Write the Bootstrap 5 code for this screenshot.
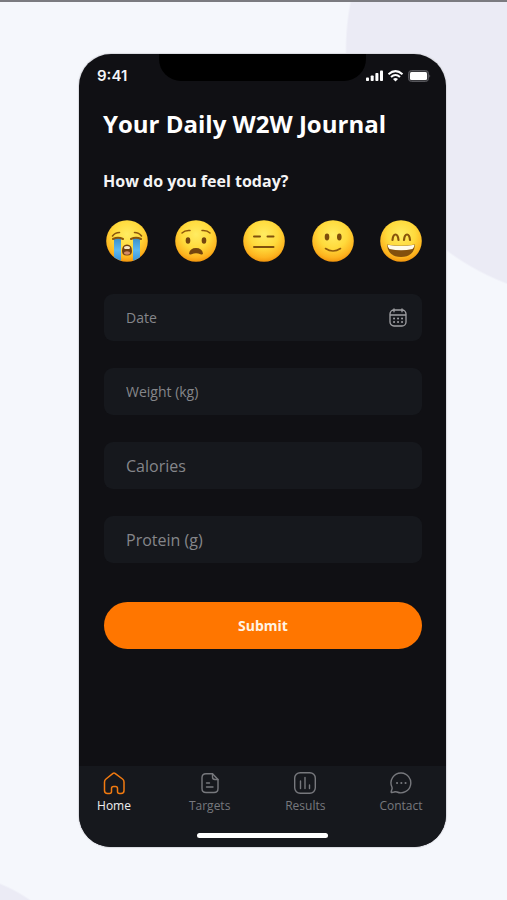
<!DOCTYPE html>
<html lang="en">
<head>
<meta charset="utf-8">
<meta name="viewport" content="width=device-width, initial-scale=1">
<title>Your Daily W2W Journal</title>
<link href="https://cdn.jsdelivr.net/npm/bootstrap@5.3.0/dist/css/bootstrap.min.css" rel="stylesheet">
<style>
  body {
    font-family: "Open Sans", "Noto Sans", sans-serif;
    background:
      radial-gradient(circle at calc(100% + 89px) 50px, #ebebf5 249px, transparent 251px),
      radial-gradient(circle at -56px calc(100% + 123px), #ebebf5 149px, transparent 151px),
      #f5f7fc;
    border-top: 2px solid #7b7b80;
    padding: 52px 61px 53px 79px;
  }
  .phone { background: #101014; border-radius: 32px; box-shadow: 0 0 1px 1px #d9dae0; }
  .status { display: grid; grid-template-columns: 1fr 207px 1fr; height: 44px; color: #f5f5f7; }
  .status time { font: 600 15px/20px "Inter", sans-serif; padding-left: 18px; }
  .status svg { margin-right: 15px; }
  .notch { height: 27px; background: #000; border-radius: 0 0 22px 22px; }
  .screen { padding: 0 24px; }
  .title { font-size: 24px; line-height: 32px; font-weight: 700; margin: 10px 0 0; color: #fff; }
  .ask { font-size: 16px; line-height: 24px; font-weight: 700; margin: 29px 0 27px; color: #f4f4f5; }
  .mood { border: 0; padding: 0; background: none; border-radius: 50%; line-height: 0; }
  .moods { padding: 0 0 0 3px; }
  .entries { gap: 27px; margin-top: 32px; }
  .entry { background: #16181d; border-radius: 9px; height: 47px; padding: 0 15px 0 22px; margin-left: 1px; color: #85868a; }
  .entry input { background: none; border: 0; color: #f4f4f5; padding: 0; min-width: 0; font-size: 16px; line-height: 24px; outline: 0; }
  .entry input::placeholder { color: #85868a; opacity: 1; }
  .entry .compact { font-size: 14px; }
  .send { height: 47px; margin: 39px 0 0 1px; background: #ff7600; color: #fff3e4; font-size: 14px; font-weight: 700; border: 0; }
  .send:hover { background: #ee6d00; color: #fff; }
  .tabs { background: #16181d; margin-top: 117px; padding: 5px 0 9px; border-radius: 0 0 32px 32px; }
  .tab-row { padding: 0 23px 0 13px; }
  .tab { width: 44px; color: #77787d; font-size: 12px; line-height: 16px; text-decoration: none; gap: 3px; }
  .tab.active { color: #eeeeef; }
  .tab.active svg { color: #f17a10; }
  .homebar { width: 131px; height: 5px; border-radius: 3px; background: #fff; margin-top: 19px; }
</style>
<script src="https://cdn.jsdelivr.net/npm/bootstrap@5.3.0/dist/js/bootstrap.bundle.min.js"></script>
</head>
<body class="min-vh-100">
<main class="phone">
  <div class="status align-items-center">
    <time>9:41</time>
    <div class="notch align-self-start"></div>
    <svg class="ms-auto" width="65" height="14" viewBox="0 0 65 14" fill="#fff" aria-hidden="true">
      <rect x="0" y="8.5" width="3" height="3.5" rx=".8"/><rect x="4.7" y="6.5" width="3" height="5.5" rx=".8"/><rect x="9.4" y="4" width="3" height="8" rx=".8"/><rect x="14" y="1.5" width="3" height="10.5" rx=".8"/>
      <g fill="none" stroke="#fff" stroke-width="2"><path d="M22.500 5.200Q29.500 -1 36.500 5.200"/><path d="M25 8Q29.500 4 34 8"/></g>
      <path d="M27 10Q29.500 8 32 10L29.500 12.500Z"/>
      <rect x="42.500" y="1.500" width="20" height="11" rx="3" fill="#38383c" stroke="#55555a"/><rect x="44" y="3" width="17" height="8" rx="1.500"/><path d="M63.500 5.200q1.500 1.800 0 3.600z" fill="#77777b"/>
    </svg>
  </div>

  <form class="screen">
    <h1 class="title">Your Daily W2W Journal</h1>
    <h2 class="ask">How do you feel today?</h2>
    <svg width="0" height="0" class="position-absolute" aria-hidden="true">
      <defs>
        <radialGradient id="face" cx=".5" cy=".34" r=".68">
          <stop offset="0" stop-color="#ffec62"/><stop offset=".5" stop-color="#ffda3c"/><stop offset=".82" stop-color="#fdb41f"/><stop offset="1" stop-color="#f08f0a"/>
        </radialGradient>
        <linearGradient id="tear" x2="0" y2="1"><stop offset="0" stop-color="#3a8fc9"/><stop offset=".5" stop-color="#5db9f0"/><stop offset="1" stop-color="#398fd4"/></linearGradient>
        <clipPath id="round"><circle cx="21" cy="21" r="20.700"/></clipPath>
      </defs>
    </svg>
    <div class="moods d-flex justify-content-between">
      <button type="button" class="mood" aria-label="Terrible">
        <svg width="42" height="42" viewBox="0 0 42 42"><circle cx="21" cy="21" r="20.800" fill="url(#face)"/>
          <g clip-path="url(#round)"><path d="M8 19Q11 17 15 19V42H8ZM27 19Q31 17 34 19V42H27Z" fill="url(#tear)"/></g>
          <g fill="none" stroke="#8a560d" stroke-width="1.600" stroke-linecap="round"><path d="M6.500 16Q9 12.500 13.500 12.500M28.500 12.500Q33 12.500 35.500 16"/><path d="M7 19Q12 16.500 17 19M25 19Q30 16.500 35 19" stroke-width="2"/></g>
          <path d="M16 31Q16 24.500 21 24.500T26 31Q26 35.500 21 35.500T16 31Z" fill="#714012"/><path d="M18 27Q21 25 24 27L23.500 29H18.500Z" fill="#f7e8c5"/><ellipse cx="21" cy="33" rx="3" ry="1.700" fill="#d58b67"/></svg>
      </button>
      <button type="button" class="mood" aria-label="Bad">
        <svg width="42" height="42" viewBox="0 0 42 42"><circle cx="21" cy="21" r="20.800" fill="url(#face)"/>
          <g fill="none" stroke="#8f590c" stroke-width="1.500" stroke-linecap="round"><path d="M7 13Q10 10 15 10.500M27 10.500Q32 10 35 13"/></g>
          <g fill="#74450e"><ellipse cx="13" cy="20.500" rx="2.300" ry="3.200"/><ellipse cx="29" cy="20.500" rx="2.300" ry="3.200"/><path d="M14 33.500Q15 28 21 28T28 33.500Q27.500 35.300 25.500 34.200Q21 32.500 16.500 34.200Q14.500 35.300 14 33.500Z"/></g></svg>
      </button>
      <button type="button" class="mood" aria-label="Neutral">
        <svg width="42" height="42" viewBox="0 0 42 42"><circle cx="21" cy="21" r="20.800" fill="url(#face)"/>
          <path d="M11 16.500h6M24.500 16.500h6M11 27h19.500" fill="none" stroke="#80500c" stroke-width="2" stroke-linecap="round"/></svg>
      </button>
      <button type="button" class="mood" aria-label="Good">
        <svg width="42" height="42" viewBox="0 0 42 42"><circle cx="21" cy="21" r="20.800" fill="url(#face)"/>
          <g fill="#7e4d0b"><ellipse cx="15" cy="17" rx="2.300" ry="3.400"/><ellipse cx="27.300" cy="17" rx="2.300" ry="3.400"/></g><path d="M13.500 28.500Q21 33.500 28.500 28.500" fill="none" stroke="#8f590c" stroke-width="1.600" stroke-linecap="round"/></svg>
      </button>
      <button type="button" class="mood" aria-label="Great">
        <svg width="42" height="42" viewBox="0 0 42 42"><circle cx="21" cy="21" r="20.800" fill="url(#face)"/>
          <path d="M12.500 20Q13 14.500 15.500 14.500T18.500 20M24 20Q24.500 14.500 27 14.500T30 20" fill="none" stroke="#88530b" stroke-width="2.200" stroke-linecap="round"/>
          <path d="M7 24.500Q21 27 35 24.500Q34 37 21 37T7 24.500Z" fill="#83500d"/><path d="M7.500 24.800Q21 27.200 34.500 24.800Q34.300 28 32.500 29Q21 31.500 9.500 29Q7.800 28 7.500 24.800Z" fill="#fffbea"/></svg>
      </button>
    </div>

    <div class="entries d-flex flex-column">
      <div class="entry d-flex align-items-center">
        <input class="compact flex-grow-1" type="text" placeholder="Date" aria-label="Date">
        <svg width="18" height="20" viewBox="0 0 18 20" fill="none" stroke="#a0a0a4" stroke-width="1.300" stroke-linecap="round" aria-hidden="true"><rect x="1" y="2" width="16" height="16" rx="4"/><path d="M1.500 7h15M5 .8v3M13 .8v3"/><path d="M5 10.500h.1M9 10.500h.1M13 10.500h.1M5 14h.1M9 14h.1M13 14h.1" stroke-width="1.900"/></svg>
      </div>
      <div class="entry d-flex align-items-center">
        <input class="compact flex-grow-1" type="text" placeholder="Weight (kg)" aria-label="Weight (kg)">
      </div>
      <div class="entry d-flex align-items-center">
        <input class="flex-grow-1" type="text" placeholder="Calories" aria-label="Calories">
      </div>
      <div class="entry d-flex align-items-center">
        <input class="flex-grow-1" type="text" placeholder="Protein (g)" aria-label="Protein (g)">
      </div>
    </div>
    <div class="d-flex"><button type="submit" class="send btn rounded-pill flex-grow-1">Submit</button></div>
  </form>

  <nav class="tabs" aria-label="Main">
    <div class="tab-row d-flex justify-content-between">
      <a href="#home" class="tab active d-flex flex-column align-items-center" aria-current="page">
        <svg width="24" height="24" viewBox="0 0 24 24" fill="none" stroke="currentColor" stroke-width="1.500" stroke-linejoin="round"><path d="M11 2.300Q12 1.600 13 2.300L20.500 8Q22 9.200 22 11V19.500Q22 22.500 19 22.500H17.500Q15.500 22.500 15.500 20.500V17.500Q15.500 15.500 13.500 15.500H11.500Q9.500 15.500 9.500 17.500V20.500Q9.500 22.500 7.500 22.500H5.500Q2.500 22.500 2.500 19.500V11Q2.500 9.200 4 8Z"/></svg>
        <span>Home</span></a>
      <a href="#targets" class="tab d-flex flex-column align-items-center">
        <svg width="24" height="24" viewBox="0 0 24 24" fill="none" stroke="currentColor" stroke-width="1.400" stroke-linecap="round" stroke-linejoin="round"><path d="M14.500 2.700H8Q4 2.700 4 6.700V17.500Q4 21.500 8 21.500H16Q20 21.500 20 17.500V8.500Z"/><path d="M14.500 2.700V6Q14.500 8.500 17 8.500H20M8.500 12h3M8.500 16h6.500"/></svg>
        <span>Targets</span></a>
      <a href="#results" class="tab d-flex flex-column align-items-center">
        <svg width="24" height="24" viewBox="0 0 24 24" fill="none" stroke="currentColor" stroke-width="1.400" stroke-linecap="round"><rect x="1.700" y="1.700" width="20.600" height="20.600" rx="5.500"/><path d="M7.500 10v7.500M12 6.500v11M16.500 14v3.500"/></svg>
        <span>Results</span></a>
      <a href="#contact" class="tab d-flex flex-column align-items-center">
        <svg width="24" height="24" viewBox="0 0 24 24" fill="none" stroke="currentColor" stroke-width="1.400" stroke-linecap="round" stroke-linejoin="round"><path d="M12.300 2A9.900 9.900 0 1 1 8 21Q6.500 20.500 5 21L2.800 21.500Q2 21.600 2.200 20.500L3 18Q3.300 17 2.900 16A9.900 9.900 0 0 1 12.300 2Z"/><path d="M8 12h.1M12.300 12h.1M16.500 12h.1" stroke-width="2"/></svg>
        <span>Contact</span></a>
    </div>
    <div class="homebar mx-auto"></div>
  </nav>
</main>
</body>
</html>
